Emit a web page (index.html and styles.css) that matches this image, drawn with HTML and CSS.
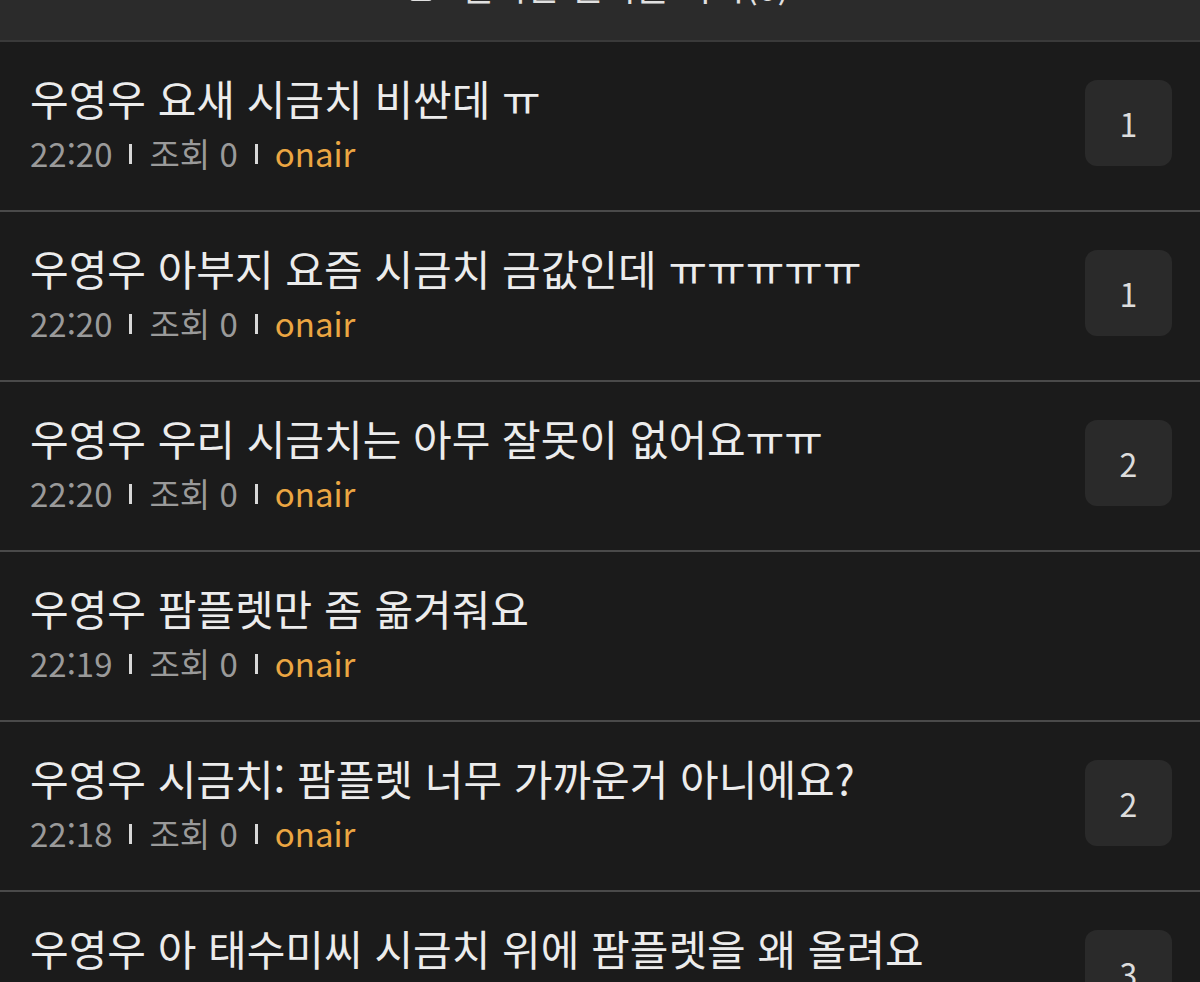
FILE: index.html
```html
<!DOCTYPE html>
<html lang="ko">
<head>
    <meta charset="UTF-8">
    <meta name="viewport" content="width=device-width, initial-scale=1.0">
    <title>실시간 게시판</title>
    <link rel="stylesheet" href="styles.css">
</head>
<body>
    <div class="topbar">
        <div class="topbar-title"><span class="topbar-icon"></span>실시간 인기글 목록(0)</div>
    </div>
    <ul class="post-list">
        <li class="post">
            <div class="post-body">
                <div class="post-title">우영우 요새 시금치 비싼데 ㅠ</div>
                <div class="post-meta"><span>22:20</span><span class="sep"></span><span>조회 0</span><span class="sep"></span><span class="author">onair</span></div>
            </div>
            <div class="count">1</div>
        </li>
        <li class="post">
            <div class="post-body">
                <div class="post-title">우영우 아부지 요즘 시금치 금값인데 ㅠㅠㅠㅠㅠ</div>
                <div class="post-meta"><span>22:20</span><span class="sep"></span><span>조회 0</span><span class="sep"></span><span class="author">onair</span></div>
            </div>
            <div class="count">1</div>
        </li>
        <li class="post">
            <div class="post-body">
                <div class="post-title">우영우 우리 시금치는 아무 잘못이 없어요ㅠㅠ</div>
                <div class="post-meta"><span>22:20</span><span class="sep"></span><span>조회 0</span><span class="sep"></span><span class="author">onair</span></div>
            </div>
            <div class="count">2</div>
        </li>
        <li class="post">
            <div class="post-body">
                <div class="post-title">우영우 팜플렛만 좀 옮겨줘요</div>
                <div class="post-meta"><span>22:19</span><span class="sep"></span><span>조회 0</span><span class="sep"></span><span class="author">onair</span></div>
            </div>
        </li>
        <li class="post">
            <div class="post-body">
                <div class="post-title">우영우 시금치: 팜플렛 너무 가까운거 아니에요?</div>
                <div class="post-meta"><span>22:18</span><span class="sep"></span><span>조회 0</span><span class="sep"></span><span class="author">onair</span></div>
            </div>
            <div class="count">2</div>
        </li>
        <li class="post">
            <div class="post-body">
                <div class="post-title">우영우 아 태수미씨 시금치 위에 팜플렛을 왜 올려요</div>
                <div class="post-meta"><span>22:18</span><span class="sep"></span><span>조회 0</span><span class="sep"></span><span class="author">onair</span></div>
            </div>
            <div class="count">3</div>
        </li>
    </ul>
</body>
</html>
```

FILE: styles.css
```css
body {
    margin: 0;
    background-color: #1b1b1b;
    font-family: "Noto Sans CJK KR", "Noto Sans", sans-serif;
    color: #e6e6e6;
    overflow: hidden;
}
.topbar {
    height: 40px;
    background-color: #2b2b2b;
    border-bottom: 2px solid #3a3a3a;
    overflow: hidden;
    display: flex;
    justify-content: center;
    align-items: flex-start;
}
.topbar-title {
    margin-top: -35px;
    font-size: 36px;
    line-height: 40px;
    height: 40px;
    color: #e0e0e0;
    display: flex;
    align-items: center;
    gap: 28px;
}
.topbar-icon {
    width: 16px;
    height: 26px;
    border: 3px solid #e0e0e0;
    border-radius: 3px;
}
.post-list {
    list-style: none;
    margin: 0;
    padding: 0;
}
.post {
    display: flex;
    align-items: center;
    height: 168px;
    padding: 0 28px 0 30px;
    border-bottom: 2px solid #4a4a4a;
}
.post-body {
    flex: 1;
    margin-top: -4px;
}
.post-title {
    font-size: 42px;
    line-height: 50px;
    color: #ececec;
}
.post-meta {
    margin-top: 8px;
    font-size: 33px;
    line-height: 44px;
    color: #9a9a9a;
    display: flex;
    align-items: center;
}
.sep {
    width: 3px;
    height: 20px;
    background-color: #d8d8d8;
    margin: 2px 17px 0;
}
.author {
    color: #eba642;
}
.count {
    width: 87px;
    height: 86px;
    border-radius: 12px;
    background-color: #2a2a2a;
    display: flex;
    align-items: center;
    justify-content: center;
    font-size: 32px;
    color: #dcdcdc;
    margin-top: -6px;
}
```
